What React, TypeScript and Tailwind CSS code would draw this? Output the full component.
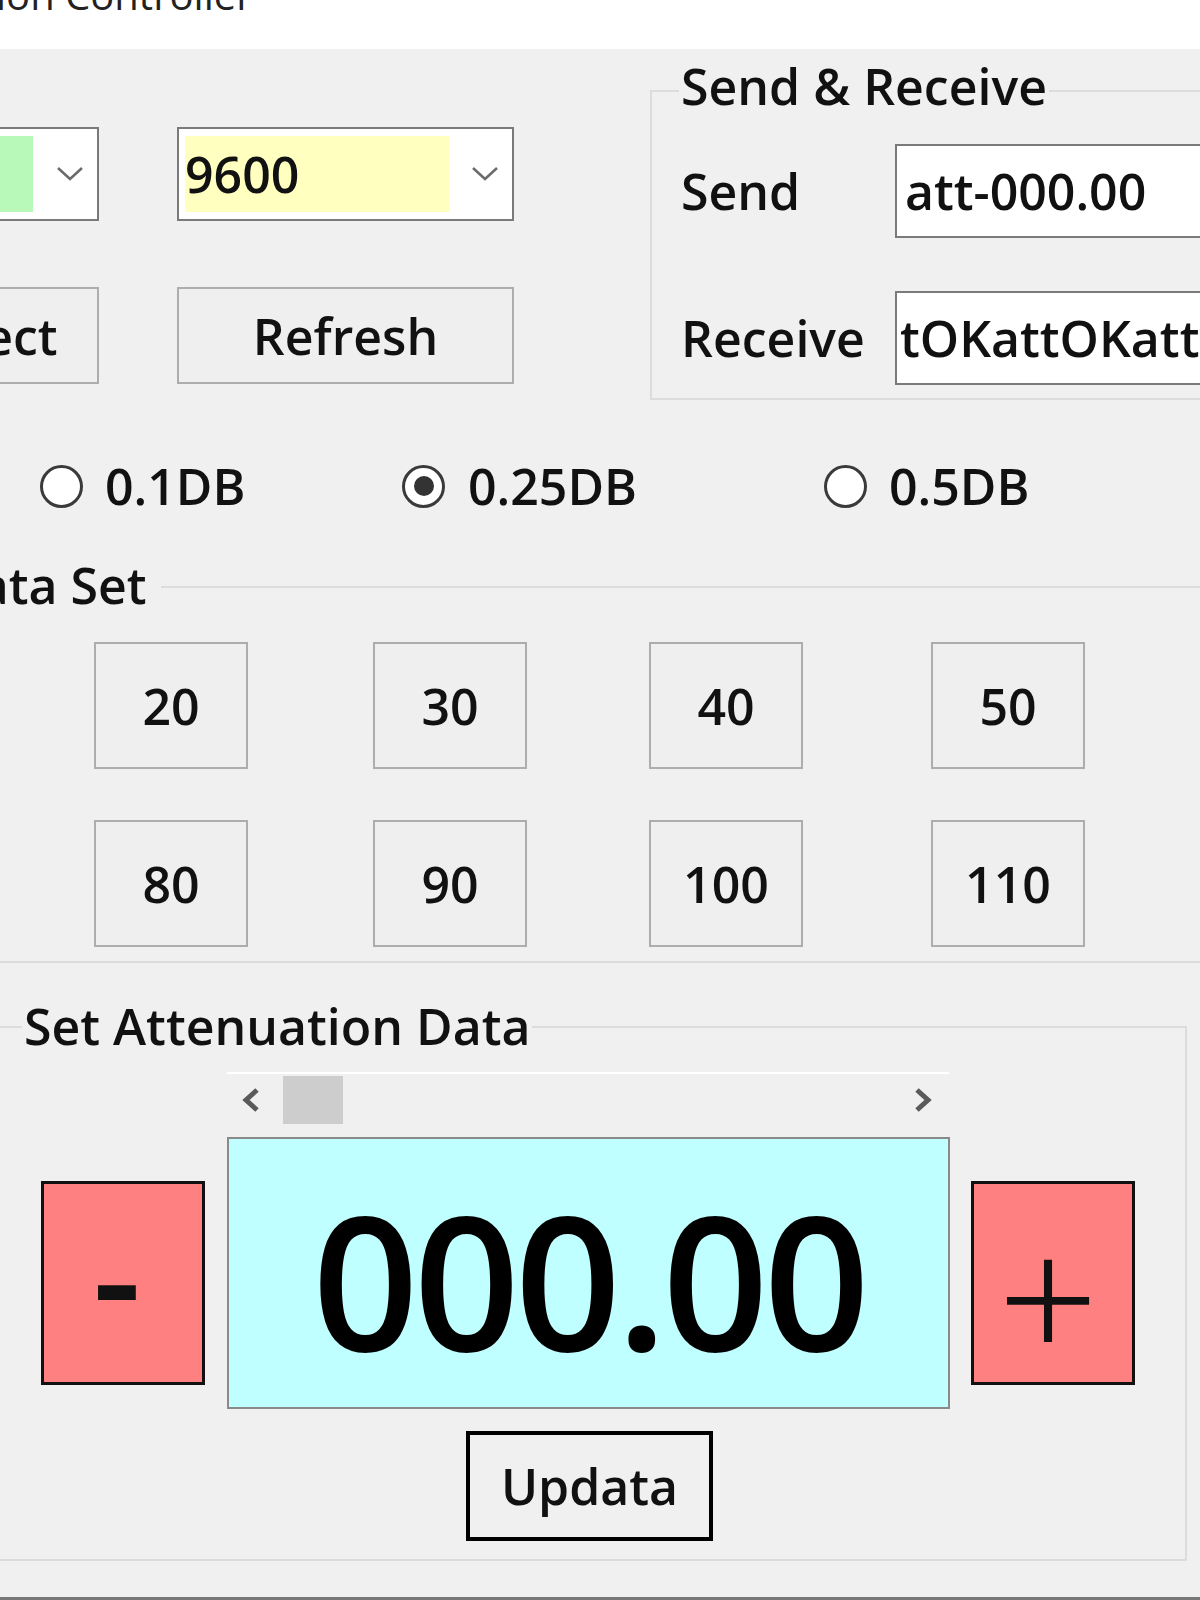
import React from "react";

const ComboChevron = () => (
  <svg width="28" height="16" viewBox="0 0 28 16" className="shrink-0">
    <polyline points="2,2 14,13 26,2" fill="none" stroke="#6b6b6b" strokeWidth="2.5" />
  </svg>
);

const ArrowLeft = () => (
  <svg width="20" height="26" viewBox="0 0 20 26" className="shrink-0">
    <polyline points="16,3 5,13 16,23" fill="none" stroke="#5a5a5a" strokeWidth="5" />
  </svg>
);

const ArrowRight = () => (
  <svg width="20" height="26" viewBox="0 0 20 26" className="shrink-0">
    <polyline points="4,3 15,13 4,23" fill="none" stroke="#5a5a5a" strokeWidth="5" />
  </svg>
);

const Radio = ({ checked }: { checked?: boolean }) => (
  <div className="w-[43px] h-[43px] rounded-full border-[3px] border-[#3a3a3a] bg-white flex items-center justify-center shrink-0">
    {checked && <div className="w-[20px] h-[20px] rounded-full bg-[#333333]" />}
  </div>
);

const DataBtn = ({ label, className = "" }: { label: string; className?: string }) => (
  <div
    className={
      "w-[154px] h-[127px] shrink-0 border-2 border-[#adadad] bg-[#efefef] flex items-center justify-center " +
      className
    }
  >
    {label}
  </div>
);

export default function App() {
  return (
    <div className="w-[1200px] h-[1600px] bg-[#f0f0f0] overflow-hidden flex flex-col font-['Open_Sans','Noto_Sans',sans-serif] font-semibold text-[#111] text-[50px] leading-[50px]">
      {/* title bar */}
      <div className="h-[49px] bg-white overflow-hidden shrink-0">
        <div className="text-[40px] leading-[40px] mt-[-25px] ml-[-4px] text-[#222] font-normal whitespace-nowrap">
          ion Controller
        </div>
      </div>

      {/* Section A */}
      <div className="h-[351px] flex shrink-0">
        <div className="flex flex-col pt-[78px] shrink-0">
          <div className="flex gap-[78px]">
            <div className="ml-[-177px] w-[276px] h-[94px] bg-white border-2 border-[#7a7a7a] flex items-center shrink-0">
              <div className="ml-[8px] w-[200px] h-[76px] bg-[#b8f8b8]" />
              <div className="ml-[23px]">
                <ComboChevron />
              </div>
            </div>
            <div className="w-[337px] h-[94px] bg-white border-2 border-[#7a7a7a] flex items-center shrink-0">
              <div className="ml-[6px] w-[264px] h-[76px] bg-[#ffffc0] flex items-center">9600</div>
              <div className="ml-[22px]">
                <ComboChevron />
              </div>
            </div>
          </div>
          <div className="flex gap-[78px] mt-[66px]">
            <div className="ml-[-177px] w-[276px] h-[97px] border-2 border-[#adadad] bg-[#efefef] flex items-center justify-center shrink-0">
              <span className="ml-[-6px]">Connect</span>
            </div>
            <div className="w-[337px] h-[97px] border-2 border-[#adadad] bg-[#efefef] flex items-center justify-center shrink-0">
              Refresh
            </div>
          </div>
        </div>

        {/* Send & Receive group */}
        <div className="ml-[136px] mt-[41px] w-[700px] h-[310px] border-2 border-[#dcdcdc] shrink-0 flex flex-col">
          <div className="mt-[-31px] ml-[27px] px-[2px] w-fit h-[50px] bg-[#f0f0f0] whitespace-nowrap">Send &amp; Receive</div>
          <div className="flex items-center mt-[33px] pl-[29px]">
            <div className="w-[214px] shrink-0">Send</div>
            <div className="w-[400px] h-[94px] bg-white border-2 border-[#7a7a7a] flex items-center pl-[8px] shrink-0">
              att-000.00
            </div>
          </div>
          <div className="flex items-center mt-[53px] pl-[29px]">
            <div className="w-[214px] shrink-0">Receive</div>
            <div className="w-[400px] h-[94px] bg-white border-2 border-[#7a7a7a] flex items-center pl-[3px] shrink-0 whitespace-nowrap overflow-hidden">
              tOKattOKatt
            </div>
          </div>
        </div>
      </div>

      {/* Radio row */}
      <div className="flex items-center h-[50px] mt-[61px] shrink-0">
        <div className="ml-[40px] w-[362px] flex items-center gap-[22px] shrink-0">
          <Radio />
          <span>0.1DB</span>
        </div>
        <div className="w-[422px] flex items-center gap-[23px] shrink-0">
          <Radio checked />
          <span>0.25DB</span>
        </div>
        <div className="flex items-center gap-[22px] shrink-0">
          <Radio />
          <span>0.5DB</span>
        </div>
      </div>

      {/* Data Set group */}
      <div className="mt-[75px] ml-[-20px] w-[1240px] border-2 border-[#dcdcdc] pb-[14px] flex flex-col shrink-0">
        <div className="mt-[-28px] ml-[-41px] pr-[14px] pl-[2px] w-fit h-[50px] bg-[#f0f0f0] whitespace-nowrap">Data Set</div>
        <div className="flex mt-[32px]">
          <DataBtn label="20" className="ml-[112px]" />
          <DataBtn label="30" className="ml-[125px]" />
          <DataBtn label="40" className="ml-[122px]" />
          <DataBtn label="50" className="ml-[128px]" />
        </div>
        <div className="flex mt-[51px]">
          <DataBtn label="80" className="ml-[112px]" />
          <DataBtn label="90" className="ml-[125px]" />
          <DataBtn label="100" className="ml-[122px]" />
          <DataBtn label="110" className="ml-[128px]" />
        </div>
      </div>

      {/* Set Attenuation Data group */}
      <div className="mt-[63px] ml-[-2px] w-[1189px] border-2 border-[#dcdcdc] pb-[18px] flex flex-col shrink-0">
        <div className="mt-[-27px] ml-[22px] px-[2px] w-fit h-[50px] bg-[#f0f0f0] whitespace-nowrap">Set Attenuation Data</div>
        <div className="mt-[21px] ml-[227px] w-[722px] h-[54px] border-t-2 border-white flex items-center shrink-0">
          <div className="ml-[14px]">
            <ArrowLeft />
          </div>
          <div className="ml-[22px] w-[60px] h-[48px] bg-[#cdcdcd]" />
          <div className="flex-1" />
          <div className="mr-[16px]">
            <ArrowRight />
          </div>
        </div>
        <div className="flex items-start mt-[11px]">
          <div className="ml-[41px] mt-[44px] w-[164px] h-[204px] bg-[#ff8080] border-[3px] border-[#111] flex items-center justify-center shrink-0">
            <span className="text-[150px] leading-[150px] font-semibold mt-[-16px] mr-[12px]">-</span>
          </div>
          <div className="ml-[22px] w-[723px] h-[272px] bg-[#c0ffff] border-2 border-[#8a8a8a] flex items-center justify-center pt-[12px] shrink-0">
            <span className="text-[186px] leading-[186px] font-semibold tracking-[-5px] text-black">000.00</span>
          </div>
          <div className="ml-[21px] mt-[44px] w-[164px] h-[204px] bg-[#ff8080] border-[3px] border-[#111] flex items-center justify-center shrink-0">
            <span className="font-['Inter',sans-serif] font-extralight text-[190px] leading-[190px] mt-[6px] mr-[10px]">+</span>
          </div>
        </div>
        <div className="mt-[22px] ml-[466px] w-[247px] h-[110px] border-[4px] border-black flex items-center justify-center shrink-0">
          Updata
        </div>
      </div>

      <div className="flex-1" />
      <div className="h-[3px] bg-[#777777] shrink-0" />
    </div>
  );
}
